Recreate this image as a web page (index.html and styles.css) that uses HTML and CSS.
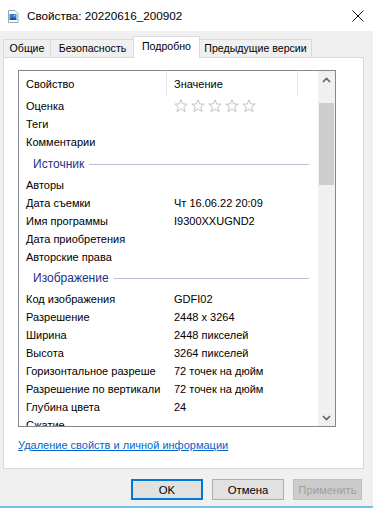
FILE: index.html
```html
<!DOCTYPE html>
<html lang="ru">
<head>
  <meta charset="UTF-8">
  <title>Свойства: 20220616_200902</title>
  <link rel="stylesheet" href="styles.css">
</head>
<body>

  <div class="titlebar">
    <svg class="app-icon" width="12" height="13" viewBox="0 0 12 13">
      <path d="M1.5 0.5h6.5l3 3v9h-9.5z" fill="#fff" stroke="#9aa4b0"/>
      <rect x="2.5" y="4" width="7" height="6" fill="#2f7fd6"/>
      <path d="M2.5 10l2.5-3 1.5 1.5 1.2-1.2 1.8 2.7z" fill="#1a4f9a"/>
      <rect x="7" y="5" width="1.2" height="1.2" fill="#cfe6ff"/>
    </svg>
    <span class="title">Свойства: 20220616_200902</span>
    <span class="close">
      <svg width="12" height="12" viewBox="0 0 12 12"><path d="M0.5 0.5l11 11M11.5 0.5l-11 11" stroke="#111" stroke-width="1"/></svg>
    </span>
  </div>

  <div class="tabs">
    <div class="tab tab-general">Общие</div>
    <div class="tab tab-security">Безопасность</div>
    <div class="tab tab-details active">Подробно</div>
    <div class="tab tab-versions">Предыдущие версии</div>
  </div>

  <div class="panel">
    <div class="listview">
      <div class="list">
        <div class="header">
          <div class="hcol name">Свойство</div>
          <div class="hcol value">Значение</div>
        </div>

        <div class="row"><span class="name">Оценка</span>
          <span class="value stars">
            <svg width="84" height="14" viewBox="0 0 84 14">
              <g fill="#fff" stroke="#c4c4c4" stroke-width="1">
                <polygon points="7,0.8 8.7,5 13.2,5.1 9.7,8 11,12.6 7,10 3,12.6 4.3,8 0.8,5.1 5.3,5"/>
                <polygon transform="translate(17 0)" points="7,0.8 8.7,5 13.2,5.1 9.7,8 11,12.6 7,10 3,12.6 4.3,8 0.8,5.1 5.3,5"/>
                <polygon transform="translate(34 0)" points="7,0.8 8.7,5 13.2,5.1 9.7,8 11,12.6 7,10 3,12.6 4.3,8 0.8,5.1 5.3,5"/>
                <polygon transform="translate(51 0)" points="7,0.8 8.7,5 13.2,5.1 9.7,8 11,12.6 7,10 3,12.6 4.3,8 0.8,5.1 5.3,5"/>
                <polygon transform="translate(68 0)" points="7,0.8 8.7,5 13.2,5.1 9.7,8 11,12.6 7,10 3,12.6 4.3,8 0.8,5.1 5.3,5"/>
              </g>
            </svg>
          </span>
        </div>
        <div class="row"><span class="name">Теги</span><span class="value"></span></div>
        <div class="row"><span class="name">Комментарии</span><span class="value"></span></div>

        <div class="group first"><span>Источник</span><i></i></div>
        <div class="row"><span class="name">Авторы</span><span class="value"></span></div>
        <div class="row"><span class="name">Дата съемки</span><span class="value">Чт 16.06.22 20:09</span></div>
        <div class="row"><span class="name">Имя программы</span><span class="value">I9300XXUGND2</span></div>
        <div class="row"><span class="name">Дата приобретения</span><span class="value"></span></div>
        <div class="row"><span class="name">Авторские права</span><span class="value"></span></div>

        <div class="group"><span>Изображение</span><i></i></div>
        <div class="row"><span class="name">Код изображения</span><span class="value">GDFI02</span></div>
        <div class="row"><span class="name">Разрешение</span><span class="value">2448 x 3264</span></div>
        <div class="row"><span class="name">Ширина</span><span class="value">2448 пикселей</span></div>
        <div class="row"><span class="name">Высота</span><span class="value">3264 пикселей</span></div>
        <div class="row"><span class="name">Горизонтальное разреше</span><span class="value">72 точек на дюйм</span></div>
        <div class="row"><span class="name">Разрешение по вертикали</span><span class="value">72 точек на дюйм</span></div>
        <div class="row"><span class="name">Глубина цвета</span><span class="value">24</span></div>
        <div class="row"><span class="name">Сжатие</span><span class="value"></span></div>
      </div>

      <div class="scrollbar">
        <div class="arrow">
          <svg width="9" height="6" viewBox="0 0 9 6"><path d="M1 5l3.5-3.5 3.5 3.5" fill="none" stroke="#606060" stroke-width="1.6"/></svg>
        </div>
        <div class="track"><div class="thumb"></div></div>
        <div class="arrow">
          <svg width="9" height="6" viewBox="0 0 9 6"><path d="M1 1l3.5 3.5 3.5-3.5" fill="none" stroke="#606060" stroke-width="1.6"/></svg>
        </div>
      </div>
    </div>

    <a class="remove-link" href="#">Удаление свойств и личной информации</a>
  </div>

  <div class="buttons">
    <button class="btn default">OK</button>
    <button class="btn">Отмена</button>
    <button class="btn disabled">Применить</button>
  </div>

  <div class="frame-bottom"></div>

</body>
</html>
```

FILE: styles.css
```css
body {
  margin: 0;
  width: 373px;
  height: 508px;
  overflow: hidden;
  background: #f0f0f0;
  font-family: "Liberation Sans", Arial, sans-serif;
  font-size: 11px;
  color: #000;
}

.titlebar {
  height: 31px;
  background: #fff;
  display: flex;
  align-items: center;
}
.app-icon {
  margin-left: 7px;
  margin-top: 1px;
}
.title {
  margin-left: 8px;
  font-size: 11.7px;
}
.close {
  margin-left: auto;
  margin-right: 9px;
  display: flex;
}

.tabs {
  display: flex;
  margin-top: 8px;
  padding-left: 3px;
  height: 18px;
  align-items: flex-end;
}
.tab {
  height: 17px;
  line-height: 17px;
  text-align: center;
  border: 1px solid #d9d9d9;
  border-bottom: none;
  margin-right: -1px;
  background: #f0f0f0;
  white-space: nowrap;
  font-size: 10.6px;
  box-sizing: content-box;
}
.tab-general { width: 46px; }
.tab-security { width: 83px; }
.tab-details { width: 65px; }
.tab-versions { width: 111px; }
.tab.active {
  height: 21px;
  line-height: 19px;
  margin-bottom: -1px;
  background: #fff;
  position: relative;
  z-index: 1;
  margin-left: -1px;
}

.panel {
  margin-left: 3px;
  width: 361px;
  height: 412px;
  background: #fff;
  border: 1px solid #d9d9d9;
  padding: 12px 0 0 14px;
  box-sizing: border-box;
}

.listview {
  width: 318px;
  height: 357px;
  border: 1px solid #828790;
  box-sizing: border-box;
  display: flex;
  overflow: hidden;
}
.list {
  flex: 1;
  overflow: hidden;
}
.header {
  display: flex;
  height: 25px;
  margin-bottom: 1px;
}
.hcol {
  line-height: 26px;
  padding-left: 7px;
  border-right: 1px solid #e5e5e5;
  box-sizing: border-box;
}
.hcol.name { width: 148px; }
.hcol.value { width: 131px; }

.row {
  display: flex;
  height: 18px;
  line-height: 19px;
  white-space: nowrap;
}
.row .name {
  width: 148px;
  padding-left: 7px;
  box-sizing: border-box;
  overflow: hidden;
}
.row .value {
  padding-left: 7px;
}
.stars {
  display: flex;
  align-items: center;
}

.group {
  display: flex;
  align-items: center;
  height: 24px;
  padding-left: 14px;
  padding-right: 9px;
  color: #1e3287;
  font-size: 12px;
}
.group.first {
  height: 25px;
}
.group i {
  flex: 1;
  height: 1px;
  background: #b6bed8;
  margin-left: 5px;
  margin-top: 1px;
}

.scrollbar {
  width: 17px;
  background: #f0f0f0;
  display: flex;
  flex-direction: column;
}
.arrow {
  height: 17px;
  display: flex;
  align-items: center;
  justify-content: center;
}
.track {
  flex: 1;
  padding-top: 15px;
}
.thumb {
  height: 82px;
  margin: 0 1px;
  background: #cdcdcd;
}

.remove-link {
  display: inline-block;
  margin-top: 12px;
  color: #0066cc;
  text-decoration: underline;
}

.buttons {
  display: flex;
  justify-content: flex-end;
  gap: 9px;
  padding-right: 11px;
  margin-top: 10px;
}
.btn {
  width: 72px;
  height: 21px;
  padding: 0;
  font-family: inherit;
  font-size: 11.3px;
  background: #e1e1e1;
  border: 1px solid #adadad;
  color: #000;
}
.btn.default {
  border: 2px solid #0078d7;
}
.btn.disabled {
  width: 69px;
  background: #cccccc;
  border-color: #bfbfbf;
  color: #a0a0a0;
}

.frame-bottom {
  margin-top: 6px;
  height: 2px;
  background: #6fc3e8;
}
```
